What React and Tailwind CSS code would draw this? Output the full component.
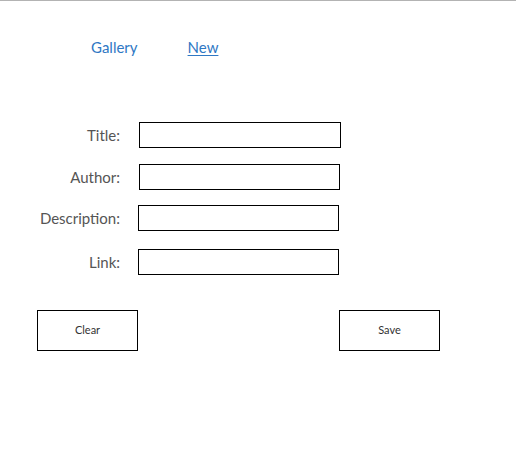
import React from 'react';

const fields = [
  { label: 'Title:', mt: 'mt-0', ml: 'ml-[139px]', w: 'w-[202px]' },
  { label: 'Author:', mt: 'mt-[16px]', ml: 'ml-[139px]', w: 'w-[201px]' },
  { label: 'Description:', mt: 'mt-[15px]', ml: 'ml-[138px]', w: 'w-[201px]' },
  { label: 'Link:', mt: 'mt-[18px]', ml: 'ml-[138px]', w: 'w-[201px]' },
];

export default function App() {
  return (
    <div className="w-[516px] h-[462px] bg-white border-t border-[#b3b3b3] font-['Lato','Liberation_Sans',sans-serif]">
      {/* nav */}
      <nav className="flex items-center h-[20px] mt-[36px] text-[15px] text-[#2f78c4]">
        <a className="ml-[91px] leading-none">Gallery</a>
        <a className="ml-[50px] leading-none underline underline-offset-2">New</a>
      </nav>

      {/* form */}
      <form className="mt-[65px]">
        {fields.map((f) => (
          <div key={f.label} className={`relative flex items-center ${f.mt}`}>
            <label className="absolute right-[396px] text-[15px] text-[#555]">{f.label}</label>
            <input className={`${f.ml} ${f.w} h-[26px] border border-black outline-none`} />
          </div>
        ))}

        <div className="flex mt-[35px]">
          <button type="button" className="ml-[37px] w-[101px] h-[41px] border border-black text-[11px] text-[#333]">
            Clear
          </button>
          <button type="button" className="ml-[201px] w-[101px] h-[41px] border border-black text-[11px] text-[#333]">
            Save
          </button>
        </div>
      </form>
    </div>
  );
}
